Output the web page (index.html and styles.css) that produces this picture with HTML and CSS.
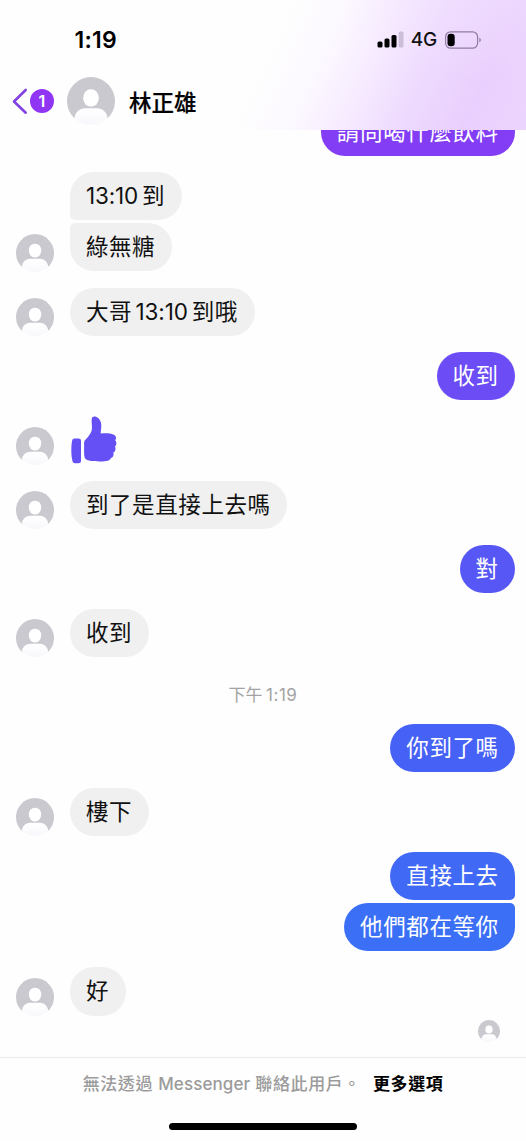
FILE: index.html
```
<!DOCTYPE html>
<html lang="zh-Hant">
<head>
<meta charset="utf-8">
<title>Messenger</title>
<link rel="stylesheet" href="styles.css">
</head>
<body>
<svg class="defs" width="0" height="0" aria-hidden="true">
  <defs>
    <linearGradient id="torso" x1="0" y1="0" x2="0" y2="1">
      <stop offset="0" stop-color="#ffffff"/>
      <stop offset="1" stop-color="#f8f8fc"/>
    </linearGradient>
    <symbol id="person" viewBox="0 0 48 48">
      <path d="M8 42A24 24 0 1 1 40 42Z" fill="#c9c9cf"/>
      <rect x="16.200" y="12.200" width="15.600" height="17.400" rx="7.500" ry="8.300" fill="#fff"/>
      <path d="M7.200 41.200C8.500 35 12.500 31.300 18 31.300H30C35.500 31.300 39.500 35 40.800 41.200A24 24 0 0 1 7.200 41.200Z" fill="url(#torso)"/>
    </symbol>
  </defs>
</svg>
<div class="phone">
  <header class="header">
    <div class="status">
      <span class="clock">1:19</span>
      <div class="indicators">
        <svg class="signal" viewBox="0 0 27 17" width="27" height="17">
          <rect x="0.500" y="10.500" width="5" height="6" rx="1.500"/>
          <rect x="7.500" y="7.500" width="5" height="9" rx="1.500"/>
          <rect x="14.500" y="4" width="5" height="12.500" rx="1.500"/>
          <rect x="21.700" y="0.500" width="4.800" height="16" rx="1.500" fill="#ccbdd8"/>
        </svg>
        <span class="network">4G</span>
        <svg class="battery" viewBox="0 0 37 18" width="37" height="18">
          <rect x="0.600" y="0.800" width="32" height="16.400" rx="5" fill="none" stroke="#927ba3" stroke-width="1.200"/>
          <rect x="2.500" y="2.800" width="7.200" height="12.400" rx="3"/>
          <path d="M34.400 6.500Q37.400 9 34.400 11.500Z" fill="#927ba3"/>
        </svg>
      </div>
    </div>
    <div class="title">
      <svg class="back" viewBox="0 0 16 27" width="16" height="27"><path d="M13.700 2L2 13.500L13.700 24.700" fill="none" stroke="#8241e2" stroke-width="2.600" stroke-linecap="round" stroke-linejoin="round"/></svg>
      <span class="count">1</span>
      <svg class="portrait"><use href="#person"/></svg>
      <h1 class="name">林正雄</h1>
    </div>
  </header>

  <main class="chat">
    <div class="row out"><p class="bubble violet">請問喝什麼飲料</p></div>
    <div class="row in no-avatar"><p class="bubble first"><span class="digits">13:10</span>到</p></div>
    <div class="row in joined"><svg class="avatar"><use href="#person"/></svg><p class="bubble last">綠無糖</p></div>
    <div class="row in"><svg class="avatar"><use href="#person"/></svg><p class="bubble">大哥<span class="digits inner">13:10</span>到哦</p></div>
    <div class="row out"><p class="bubble purple">收到</p></div>
    <div class="row in"><svg class="avatar"><use href="#person"/></svg>
      <svg class="thumb" viewBox="0 0 48 48" width="48" height="48" fill="#6450f5">
        <path d="M4.500 22.600H8.300Q11 22.600 11 25V44.700Q11 47.200 8.300 47.200H5Q2.900 47.200 2.400 45C1 39 1 31 2 25Q2.400 22.600 4.500 22.600Z"/>
        <path d="M14.800 24.500C17 22 20.700 18 21.700 14.500C22.500 11.200 21.300 6.300 21.700 3C22 0.400 24.500 0.200 26.500 1C29.500 2.200 31.200 5.500 31.300 9.300C31.400 12.400 30.700 15 30.700 17.600C34.500 17 40.500 17.200 43.300 18.400C46 19.500 46.800 22 45.200 24.300C46.900 26.200 46.800 29.200 45 30.600C46.100 32.700 45.600 35.500 43.300 36.700C44.100 39 43.200 41.200 41 42C40.200 44.400 37 45.500 30 45.500C23 45.500 18.500 44.900 16.300 43.600C14.700 42.600 14.200 40.500 14.100 37V28C14.100 26.500 14.200 25.400 14.800 24.500Z"/>
      </svg>
    </div>
    <div class="row in"><svg class="avatar"><use href="#person"/></svg><p class="bubble">到了是直接上去嗎</p></div>
    <div class="row out"><p class="bubble indigo">對</p></div>
    <div class="row in"><svg class="avatar"><use href="#person"/></svg><p class="bubble">收到</p></div>
    <time class="stamp">下午<span class="stamp-time">1:19</span></time>
    <div class="row out after-stamp"><p class="bubble blue-1">你到了嗎</p></div>
    <div class="row in"><svg class="avatar"><use href="#person"/></svg><p class="bubble">樓下</p></div>
    <div class="row out"><p class="bubble blue-2 first">直接上去</p></div>
    <div class="row out joined"><p class="bubble blue-3 last">他們都在等你</p></div>
    <div class="row in"><svg class="avatar"><use href="#person"/></svg><p class="bubble">好</p></div>
    <svg class="seen"><use href="#person"/></svg>
  </main>

  <footer class="footer">
    <p class="notice"><span>無法透過 <span class="brand">Messenger</span> 聯絡此用戶。</span><a class="more">更多選項</a></p>
    <div class="home"></div>
  </footer>
</div>
</body>
</html>
```
FILE: styles.css
```
* { box-sizing: border-box; }
body { margin: 0; background: #fefefe; font-family: Inter, "Noto Sans CJK TC", sans-serif; color: #111; }
p, h1 { margin: 0; }
.defs { display: block; height: 0; }
svg { flex: none; display: block; }

.phone { width: 526px; height: 1141px; display: flex; flex-direction: column; overflow: hidden; }

.header {
  flex: none;
  height: 130.4px;
  background:
    radial-gradient(ellipse 190px 80px at 526px 0, rgba(242, 224, 255, .5), rgba(242, 224, 255, 0)),
    linear-gradient(115deg, #fefefe 50%, #fcf8ff 60%, #f6eaff 69%, #eedafe 78%, #e9cffd 89%, #ecd5fe 100%);
}
.status { display: flex; justify-content: space-between; align-items: center; height: 77.300px; padding: 2px 44px 0 74.500px; }
.clock { font-size: 23px; font-weight: 600; line-height: 26px; letter-spacing: .2px; color: #000; }
.indicators { display: flex; align-items: center; }
.signal { margin-right: 7px; }
.network { font-size: 19px; font-weight: 500; line-height: 24px; color: #111; margin: 1px 8px 0 0; letter-spacing: -.2px; }

.title { display: flex; align-items: center; height: 48px; padding-left: 12px; }
.count { width: 24px; height: 24px; margin-left: 2px; border-radius: 50%; background: #9035f3; color: #fff; font-size: 16px; font-weight: 600; line-height: 24px; text-align: center; }
.portrait { width: 48px; height: 48px; margin-left: 13px; }
.name { margin: 3px 0 0 14px; font-size: 22.500px; font-weight: 500; line-height: 30px; color: #000; -webkit-text-stroke: .2px #000; }

.chat { flex: none; height: 926.600px; overflow: hidden; display: flex; flex-direction: column; }
.row { display: flex; flex: none; height: 48.100px; margin-top: 16.200px; align-items: flex-end; }
.row:first-child { margin-top: -22.400px; }
.row.joined { margin-top: 3px; }
.row.after-stamp { margin-top: 0; }
.in { padding-left: 16px; gap: 16px; }
.in.no-avatar { padding-left: 70px; }
.out { justify-content: flex-end; padding-right: 10.700px; }
.avatar { width: 38px; height: 38px; margin-bottom: -.3px; }
.bubble { height: 48.100px; padding: 0 16.600px 0 15.900px; border-radius: 24px; background: #f0f0f0; font-size: 22.500px; letter-spacing: .6px; line-height: 48px; white-space: nowrap; }
.digits { font-size: 22.500px; letter-spacing: -.15px; margin-right: 4px; }
.digits.inner { margin-left: 3.500px; }
.in .first { border-bottom-left-radius: 5px; }
.in .last { border-top-left-radius: 5px; }
.out .first { border-bottom-right-radius: 5px; }
.out .last { border-top-right-radius: 5px; }
.out .bubble { color: #fff; }
.out .violet { background: #823df5; }
.out .purple { background: #6b4cf5; }
.out .indigo { background: #5757f6; }
.out .blue-1 { background: #4661f6; }
.out .blue-2 { background: #4069f6; }
.out .blue-3 { background: #3a6ff6; }
.stamp { flex: none; height: 66.400px; padding-top: 6.500px; text-align: center; font-size: 17px; line-height: 62px; color: #a3a3a3; }
.stamp-time { margin-left: 3.500px; letter-spacing: .5px; }
.seen { align-self: flex-end; width: 22px; height: 22px; margin: 4.500px 26.500px 0 0; }

.footer { flex: 1; border-top: 1px solid #ebebeb; display: flex; flex-direction: column; align-items: center; }
.notice { display: flex; gap: 12px; margin-top: 12px; font-size: 17px; letter-spacing: .6px; line-height: 28px; color: #9b9b9b; font-weight: 500; white-space: nowrap; }
.brand { letter-spacing: .1px; }
.more { color: #000; font-weight: 700; }
.home { width: 188px; height: 7px; margin-top: 25.500px; border-radius: 4px; background: #000; }
```
